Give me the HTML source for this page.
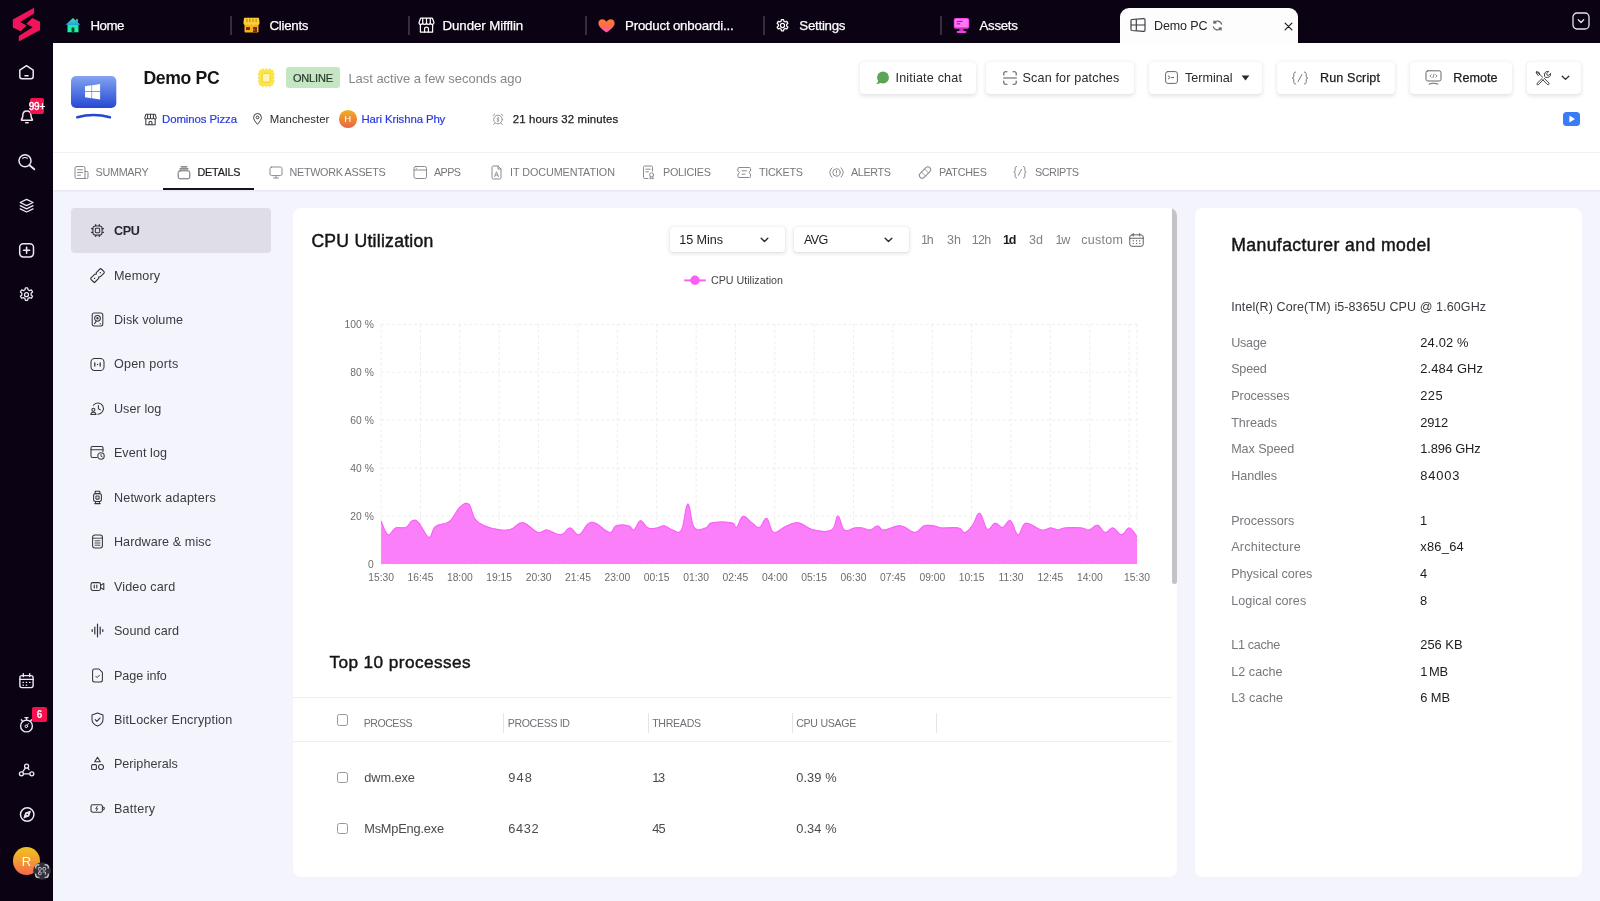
<!DOCTYPE html>
<html lang="en">
<head>
<meta charset="utf-8">
<title>Demo PC - CPU</title>
<style>
*{box-sizing:border-box;margin:0;padding:0}
html,body{width:1600px;height:901px;overflow:hidden}
body{font-family:"Liberation Sans",sans-serif;background:#f4f4fd;color:#1a1a1a;position:relative;will-change:transform}
.abs{position:absolute}
svg{display:block;overflow:visible}
/* dark chrome */
#rail{position:absolute;left:0;top:0;width:53px;height:901px;background:#0b0314}
#topbar{position:absolute;left:0;top:0;width:1600px;height:43px;background:#0b0314}
.ttab{position:absolute;top:0;height:43px;color:#fff;font-size:13.300px;line-height:51px;white-space:nowrap;-webkit-text-stroke:.25px #fff}
.tsep{position:absolute;top:16px;width:1.300px;height:19px;background:#352e40;margin-left:-.7px}
#acttab{position:absolute;left:1120px;top:8px;width:178px;height:36px;background:#fdfdfe;border-radius:9px 9px 0 0}
/* header */
#head{position:absolute;left:53px;top:43px;width:1547px;height:110px;background:#fff;border-bottom:1px solid #f2f2f6}
#tabs{position:absolute;left:53px;top:153px;width:1547px;height:37px;background:#fff;box-shadow:0 1px 2px rgba(40,40,80,.08)}
.tab{position:absolute;top:0;height:37px;line-height:38px;font-size:10.8px;color:#77777d;letter-spacing:.1px;white-space:nowrap}
.btn{position:absolute;top:62px;height:32px;background:#fff;border-radius:4px;box-shadow:0 1.500px 4px rgba(30,30,60,.13),0 0 1px rgba(30,30,60,.07);font-size:12.6px;color:#1d1d1f;line-height:32px;white-space:nowrap}
/* side menu */
.mi{position:absolute;left:114px;font-size:12.6px;color:#3a3a40;white-space:nowrap;line-height:16px}
.mic{position:absolute;left:90px}
/* cards */
.card{position:absolute;background:#fff;border-radius:8px}
.lbl{position:absolute;left:1231px;font-size:12.6px;color:#77777d;line-height:16px;white-space:nowrap}
.val{position:absolute;left:1420px;font-size:12.9px;color:#1d1d1f;line-height:16px;white-space:nowrap}
.th{position:absolute;top:716px;font-size:10.6px;color:#6f6f76;line-height:14px;white-space:nowrap}
.td{position:absolute;font-size:12.8px;color:#4a4a50;line-height:16px;white-space:nowrap}
.cb{position:absolute;width:11.500px;height:11.500px;border:1px solid #97979d;border-radius:2.500px;background:#fff}
.bt{top:70px;font-size:12.600px;line-height:16px;color:#2a2a2e;white-space:nowrap;letter-spacing:.3px}
.bm{color:#1d1d1f;-webkit-text-stroke:.25px #1d1d1f}
.sel{top:226.500px;height:25.500px;background:#fff;border-radius:3px;box-shadow:0 1px 4px rgba(30,30,60,.17),0 0 1px rgba(30,30,60,.12)}
.selt{top:232px;font-size:12.600px;line-height:16px;color:#1d1d1f;white-space:nowrap}
.rng{position:absolute;top:232px;font-size:12.5px;color:#808086;line-height:16px;white-space:nowrap}
</style>
</head>
<body>
<div id="topbar"></div>
<div id="rail"></div>
<div id="acttab"></div>
<div id="head"></div>
<div id="tabs"></div>


<!-- top tabs -->
<svg class="abs" style="left:0;top:0" width="53" height="50" viewBox="0 0 53 50"><path d="M34.1 7.8 L12.8 19.4 L12.8 27.5 L20.6 31.2 L26.6 25.6 L20.2 22.0 L34.1 13.4 Z" fill="#f0145a"/><path d="M18.8 41.5 L40.1 29.9 L40.1 21.8 L32.3 18.1 L26.3 23.7 L32.7 27.3 L18.8 35.9 Z" fill="#f0145a"/></svg>

<svg class="abs" style="left:65px;top:17px" width="16" height="16" viewBox="0 0 16 16"><defs><linearGradient id="gh" x1="0" y1="0" x2="0" y2="1"><stop offset="0" stop-color="#3fe6b4"/><stop offset=".47" stop-color="#2a9fe0"/><stop offset=".53" stop-color="#1fe9a6"/><stop offset="1" stop-color="#17f7a0"/></linearGradient></defs><path d="M8 1 L15.400 7.800 L13.500 7.800 L13.500 15.200 L2.500 15.200 L2.500 7.800 L.6 7.800 Z M11 2.200 L13 2.200 L13 5.200 L11 3.500 Z" fill="url(#gh)"/><rect x="6.600" y="10.600" width="2.800" height="4.600" rx=".6" fill="#0d4a3a"/></svg>
<div class="ttab" id="tt0" style=";letter-spacing:-0.49px;left:90.5px">Home</div>
<div class="tsep" style="left:231px"></div>

<svg class="abs" style="left:243px;top:17px" width="17" height="16" viewBox="0 0 17 16"><rect x="1.5" y="6" width="14" height="9.5" rx="1" fill="#f6b21c"/><path d="M1 1.5 Q1 .8 1.8 .8 L15.2 .8 Q16 .8 16 1.5 L16.6 6 Q16.6 8 14.6 8 Q13 8 12.6 6.8 Q12.2 8 10.6 8 Q9 8 8.5 6.8 Q8 8 6.4 8 Q4.8 8 4.4 6.8 Q4 8 2.4 8 Q.4 8 .4 6 Z" fill="#fbd13a"/><rect x="3.3" y="1.8" width="1.2" height="3.4" fill="#c78a10"/><rect x="6.3" y="1.8" width="1.2" height="3.4" fill="#c78a10"/><rect x="9.4" y="1.8" width="1.2" height="3.4" fill="#c78a10"/><rect x="12.5" y="1.8" width="1.2" height="3.4" fill="#c78a10"/><rect x="3" y="10" width="4" height="3" rx=".5" fill="#7a2a10"/><rect x="10" y="10" width="4" height="5.5" rx=".5" fill="#7a2a10"/><circle cx="11" cy="12.8" r=".6" fill="#fbd13a"/></svg>
<div class="ttab" id="tt1" style=";letter-spacing:-0.28px;left:269.5px">Clients</div>
<div class="tsep" style="left:409px"></div>

<svg class="abs" style="left:418px;top:17px" width="17" height="16" viewBox="0 0 17 16" fill="none" stroke="#fff" stroke-width="1.25" stroke-linejoin="round" stroke-linecap="round"><path d="M2.6 1.2 L14.4 1.2 L16 5.6 Q16 7.4 14.2 7.4 Q12.6 7.4 12.3 6 Q12 7.4 10.4 7.4 Q8.8 7.4 8.5 6 Q8.2 7.4 6.6 7.4 Q5 7.4 4.7 6 Q4.4 7.4 2.8 7.4 Q1 7.4 1 5.6 Z"/><path d="M2.4 7.6 L2.4 15 L14.6 15 L14.6 7.6"/><path d="M6.6 15 L6.6 11.6 Q6.6 10.2 8.5 10.2 Q10.4 10.2 10.4 11.6 L10.4 15"/><path d="M4.7 1.4 L4.7 5.6 M8.5 1.4 L8.5 5.6 M12.3 1.4 L12.3 5.6"/></svg>
<div class="ttab" id="tt2" style=";letter-spacing:-0.08px;left:442.5px">Dunder Mifflin</div>
<div class="tsep" style="left:586px"></div>

<svg class="abs" style="left:598px;top:19px" width="17" height="14" viewBox="0 0 17 14"><defs><linearGradient id="ght" x1="0" y1="0" x2="0" y2="1"><stop offset="0" stop-color="#ff7a2e"/><stop offset=".55" stop-color="#ff6a55"/><stop offset="1" stop-color="#ff4fd8"/></linearGradient></defs><path d="M8.5 13.6 C2 9 .4 6.6 .4 4.2 C.4 1.8 2.2 .3 4.3 .3 C6 .3 7.6 1.2 8.5 2.8 C9.4 1.2 11 .3 12.7 .3 C14.8 .3 16.6 1.8 16.6 4.2 C16.6 6.6 15 9 8.5 13.6 Z" fill="url(#ght)"/></svg>
<div class="ttab" id="tt3" style=";letter-spacing:-0.2px;left:625px">Product onboardi...</div>
<div class="tsep" style="left:764px"></div>

<svg class="abs" style="left:775px;top:18px" width="15" height="15" viewBox="0 0 24 24" fill="none" stroke="#fff" stroke-width="2" stroke-linejoin="round"><path d="M10.3 2.5 h3.4 l.6 2.7 l2 1.1 l2.6 -.9 l1.7 3 l-2 1.9 v2.4 l2 1.9 l-1.7 3 l-2.6 -.9 l-2 1.1 l-.6 2.7 h-3.4 l-.6 -2.7 l-2 -1.1 l-2.6 .9 l-1.7 -3 l2 -1.9 v-2.4 l-2 -1.900 l1.7 -3 l2.600 .9 l2 -1.100 z"/><circle cx="12" cy="12" r="3.300"/></svg>
<div class="ttab" id="tt4" style=";letter-spacing:-0.26px;left:799.3px">Settings</div>
<div class="tsep" style="left:941px"></div>

<svg class="abs" style="left:953px;top:17px" width="17" height="17" viewBox="0 0 17 17"><rect x=".8" y="1" width="15.400" height="10.800" rx="2" fill="#f23fe6"/><rect x="1.800" y="2" width="13.400" height="8" rx="1.200" fill="#ff79f3"/><rect x="3.600" y="3.800" width="6" height="1.300" fill="#b516ad"/><rect x="3.600" y="6.200" width="3.600" height="1.300" fill="#b516ad"/><path d="M6.600 11.800 h3.800 l.6 2.400 h-5 z" fill="#d827cc"/><rect x="3.600" y="14" width="9.800" height="2" rx="1" fill="#f23fe6"/></svg>
<div class="ttab" id="tt5" style=";letter-spacing:-0.32px;left:979.5px">Assets</div>

<!-- active tab -->
<svg class="abs" style="left:1130px;top:18px" width="16" height="14" viewBox="0 0 16 14" fill="none" stroke="#3a3a40" stroke-width="1.150" stroke-linejoin="round"><path d="M1 2.400 Q1 1.600 1.800 1.500 L13.600 .6 Q15 .5 15 1.800 L15 12.200 Q15 13.500 13.600 13.400 L1.800 12.500 Q1 12.400 1 11.600 Z"/><path d="M6.300 1.200 L6.300 12.800 M1 7 L15 7"/></svg>
<div class="abs" id="t_tab" style="top:18px;font-size:12.500px;line-height:16px;color:#26262b;white-space:nowrap;letter-spacing:-0.12px;left:1154px">Demo PC</div>
<svg class="abs" style="left:1212px;top:20px" width="11" height="11" viewBox="0 0 11 11" fill="none" stroke="#55555c" stroke-width="1.100" stroke-linecap="round"><path d="M9.700 4.200 A4.400 4.400 0 0 0 2 2.800"/><path d="M1.300 6.800 A4.400 4.400 0 0 0 9 8.200"/><path d="M2 .9 L2 2.900 L4 2.900 M9 10.100 L9 8.100 L7 8.100"/></svg>
<svg class="abs" style="left:1284px;top:22px" width="9" height="9" viewBox="0 0 9 9" stroke="#1d1d1f" stroke-width="1.200" stroke-linecap="round"><path d="M1.100 1.100 L7.900 7.900 M7.900 1.100 L1.100 7.900"/></svg>
<svg class="abs" style="left:1572px;top:12px" width="18" height="18" viewBox="0 0 18 18" fill="none" stroke="#e6e3ec" stroke-width="1.300" stroke-linecap="round" stroke-linejoin="round"><rect x="1" y="1" width="16" height="16" rx="4"/><path d="M6.300 7.800 L9 10.500 L11.700 7.800"/></svg>

<!-- rail -->
<svg class="abs" style="left:0;top:43px" width="53" height="858" viewBox="0 43 53 858" fill="none" stroke="#ece9f1" stroke-width="1.500" stroke-linecap="round" stroke-linejoin="round">
<!-- home -->
<path d="M19.800 70.200 L26.500 65.700 L33.200 70.200 L33.200 76.600 Q33.200 78.800 31 78.800 L22 78.800 Q19.800 78.800 19.800 76.600 Z"/><path d="M25 75.800 L28 75.800"/>
<!-- bell -->
<path d="M22.300 120.300 Q21 120.300 21.600 119.200 Q22.800 117.500 22.800 115.400 Q22.800 111 26.900 111 Q31 111 31 115.400 Q31 117.500 32.200 119.200 Q32.800 120.300 31.500 120.300 Z"/><path d="M25.700 122.800 L28.100 122.800"/>
<!-- search -->
<circle cx="25" cy="160.800" r="6"/><path d="M29.500 165.200 L34.300 169.300" stroke-width="1.800"/><path d="M22.600 158.300 Q25 156.600 27.400 158.300" stroke-width="1.100"/>
<!-- layers -->
<path d="M26.600 199.400 L33 202.500 L26.600 205.600 L20.200 202.500 Z" stroke-width="1.300"/><path d="M20.200 205.700 L26.600 208.800 L33 205.700" stroke-width="1.300"/><path d="M20.200 208.900 L26.600 212 L33 208.900" stroke-width="1.300"/>
<!-- plus -->
<rect x="19.700" y="243.700" width="13.800" height="13.200" rx="3.600"/><path d="M26.600 247.300 L26.600 253.300 M23.600 250.300 L29.600 250.300" stroke-width="1.600"/>
<!-- gear -->
<g transform="translate(26.500 294.700) scale(.66) translate(-12 -12)" stroke-width="1.900"><path d="M10.300 1.500 h3.400 l.7 3 l2.200 1.300 l2.900 -1 l1.700 3 l-2.200 2 v2.600 l2.200 2 l-1.700 3 l-2.900 -1 l-2.200 1.300 l-.7 3 h-3.400 l-.7 -3 l-2.200 -1.300 l-2.900 1 l-1.700 -3 l2.200 -2 v-2.600 l-2.200 -2 l1.700 -3 l2.900 1 l2.200 -1.300 z"/><circle cx="12" cy="12" r="3"/></g>
<!-- calendar -->
<rect x="19.900" y="675.600" width="13.200" height="12" rx="2" stroke-width="1.400"/><path d="M19.900 679.400 L33.100 679.400 M23.300 673.800 L23.300 676.600 M29.700 673.800 L29.700 676.600" stroke-width="1.400"/><path d="M23 682.400 h.4 M26.300 682.400 h.4 M29.600 682.400 h.4 M23 685.200 h.4 M26.300 685.200 h.4" stroke-width="1.300"/>
<!-- stopwatch -->
<circle cx="26.500" cy="726" r="5.900" stroke-width="1.400"/><path d="M24.900 717.600 L28.100 717.600 M26.500 717.800 L26.500 719.800 M21.300 719.800 L22.500 721 M31.700 719.800 L30.500 721" stroke-width="1.300"/><circle cx="26.300" cy="726.300" r="1.300" stroke-width="1"/><path d="M27.200 725.300 L28.600 723.600" stroke-width="1"/>
<!-- network -->
<circle cx="26.600" cy="766.200" r="2" stroke-width="1.300"/><circle cx="21.400" cy="773.800" r="2" stroke-width="1.300"/><circle cx="31.800" cy="773.800" r="2" stroke-width="1.300"/><path d="M25.400 767.900 L22.600 772 M27.800 767.900 L29 769.600 M23.600 773.800 L29.600 773.800" stroke-width="1.300"/>
<!-- compass -->
<circle cx="27.200" cy="814.500" r="6.700" stroke-width="1.500"/><path d="M30.300 811.400 L28.700 816 L24.100 817.600 L25.700 813 Z" stroke-width="1.200" fill="#ece9f1"/><circle cx="27.200" cy="814.500" r=".8" fill="#0b0314" stroke="none"/>
</svg>
<div class="abs" style="left:29.500px;top:98.300px;width:14.800px;height:15.700px;border-radius:2px;background:#f4114f"></div>
<div class="abs" style="left:24.500px;top:98.500px;width:25px;height:15px;line-height:15px;text-align:center;color:#fff;font-size:10px;-webkit-text-stroke:.4px #fff;letter-spacing:-.1px">99+</div>
<div class="abs" style="left:32px;top:707px;width:15px;height:15px;border-radius:2px;background:#f4114f;line-height:15px;text-align:center;color:#fff;font-size:10px;font-weight:bold">6</div>
<div class="abs" style="left:13px;top:847px;width:27px;height:28px;border-radius:50%;background:linear-gradient(180deg,#efc321 0%,#f3a030 45%,#f5674d 100%);color:#fff;font-size:13px;line-height:29px;text-align:center">R</div>
<svg class="abs" style="left:33.400px;top:862.200px" width="18" height="18" viewBox="0 0 18 18" fill="none" stroke="#e4e2e8" stroke-width="1.150" stroke-linecap="round" stroke-linejoin="round"><circle cx="9" cy="9" r="8.800" fill="#302e38" stroke="none"/><path d="M2.800 6 V4.800 Q2.800 2.800 4.800 2.800 H6 M12 2.800 H13.200 Q15.200 2.800 15.200 4.800 V6 M15.200 12 V13.200 Q15.200 15.200 13.200 15.200 H12 M6 15.200 H4.800 Q2.800 15.200 2.800 13.200 V12"/><g stroke-width=".95" stroke="#c9c7cf"><rect x="5.500" y="5.500" width="2.700" height="2.700" rx=".7"/><rect x="9.900" y="5.500" width="2.700" height="2.700" rx=".7"/><rect x="5.500" y="9.900" width="2.700" height="2.700" rx=".7"/><path d="M10 10 h2.400 v2.400"/></g></svg>

<!-- header -->
<svg class="abs" style="left:66px;top:70px" width="56" height="54" viewBox="66 70 56 54"><defs><linearGradient id="gm" x1="0" y1="0" x2="0" y2="1"><stop offset="0" stop-color="#86a4ef"/><stop offset=".4" stop-color="#5b7fe6"/><stop offset="1" stop-color="#2648d3"/></linearGradient></defs><rect x="71" y="76" width="45.300" height="32" rx="5" fill="url(#gm)"/><path d="M85 86.200 L91.500 85.300 L91.500 91.300 L85 91.300 Z M92.100 85.200 L100.100 84 L100.100 91.300 L92.100 91.300 Z M85 91.900 L91.500 91.900 L91.500 98.200 L85 97.300 Z M92.100 91.900 L100.100 91.900 L100.100 99.500 L92.100 98.300 Z" fill="#fff"/><path d="M77.300 117.300 Q93.600 112.500 109.900 117.300" fill="none" stroke="#2347d2" stroke-width="2.500" stroke-linecap="round"/></svg>
<div id="t_name" class="abs" style="top:67px;font-size:17.600px;font-weight:bold;line-height:22px;color:#151517;white-space:nowrap;letter-spacing:-0.35px;left:143.5px">Demo PC</div>
<svg class="abs" style="left:257px;top:67px" width="20" height="21" viewBox="0 0 20 21"><g stroke="#f3cf48" stroke-width="1.300" stroke-linecap="round"><path d="M5.900 1.900 V19.500 M9.200 1.900 V19.500 M12.500 1.900 V19.500 M1.300 7.300 H17.100 M1.300 10.700 H17.100 M1.300 14.100 H17.100"/></g><rect x="1.700" y="2.400" width="15" height="16.600" rx="3" fill="#fbe743"/><rect x="5.300" y="6.300" width="7.800" height="8.800" rx="1.300" fill="#fef5b4" stroke="#efcb35" stroke-width="1"/></svg>
<div class="abs" style="left:286px;top:67px;width:54px;height:21px;border-radius:3px;background:#c5e6c3"></div>
<div id="t_online" class="abs" style="top:71px;font-size:11px;line-height:15px;color:#2b3a2e;white-space:nowrap;letter-spacing:-0.19px;left:293px;-webkit-text-stroke:.2px #2b3a2e">ONLINE</div>
<div id="t_last" class="abs" style="top:69.500px;font-size:13px;line-height:17px;color:#87878c;white-space:nowrap;letter-spacing:-0.03px;left:348.4px">Last active a few seconds ago</div>

<svg class="abs" style="left:144px;top:112.500px" width="13" height="13" viewBox="0 0 17 16" fill="none" stroke="#3a3a40" stroke-width="1.350" stroke-linejoin="round" stroke-linecap="round"><path d="M2.600 1.200 L14.400 1.200 L16 5.600 Q16 7.400 14.200 7.400 Q12.600 7.400 12.300 6 Q12 7.400 10.400 7.400 Q8.800 7.400 8.500 6 Q8.200 7.400 6.600 7.400 Q5 7.400 4.700 6 Q4.400 7.400 2.800 7.400 Q1 7.400 1 5.600 Z"/><path d="M2.400 7.600 L2.400 15 L14.600 15 L14.600 7.600"/><path d="M6.600 15 L6.600 11.600 Q6.600 10.200 8.500 10.200 Q10.400 10.200 10.400 11.600 L10.400 15"/><path d="M4.700 1.400 L4.700 5.600 M8.500 1.400 L8.500 5.600 M12.300 1.400 L12.300 5.600"/></svg>
<div id="t_dom" class="abs" style="top:112px;font-size:11.400px;line-height:15px;color:#2838e4;white-space:nowrap;letter-spacing:-0.08px;left:162px;-webkit-text-stroke:.2px #2838e4">Dominos Pizza</div>
<svg class="abs" style="left:253px;top:113px" width="9" height="12" viewBox="0 0 9 12" fill="none" stroke="#3a3a40" stroke-width="1"><path d="M4.500 11.300 C1.600 8 .6 6.200 .6 4.400 A3.900 3.900 0 0 1 8.400 4.400 C8.400 6.200 7.400 8 4.500 11.300 Z"/><circle cx="4.500" cy="4.400" r="1.400"/></svg>
<div id="t_man" class="abs" style="top:112px;font-size:11.400px;line-height:15px;color:#2a2a2e;white-space:nowrap;letter-spacing:0.01px;left:269.7px">Manchester</div>
<div class="abs" style="left:339px;top:110px;width:17.500px;height:17.500px;border-radius:50%;background:linear-gradient(180deg,#efb024 0%,#ee8636 55%,#ea6244 100%);color:#fff;font-size:9.500px;line-height:17.500px;text-align:center">H</div>
<div id="t_hari" class="abs" style="top:112px;font-size:11.400px;line-height:15px;color:#2838e4;white-space:nowrap;letter-spacing:-0.11px;left:361.5px;-webkit-text-stroke:.2px #2838e4">Hari Krishna Phy</div>
<svg class="abs" style="left:492px;top:112.500px" width="12" height="12" viewBox="0 0 12 12" fill="none" stroke="#8a8a90" stroke-width=".9" stroke-linecap="round"><circle cx="6" cy="6.500" r="4.300"/><path d="M1 2.600 L2.800 1 M11 2.600 L9.200 1 M2.600 10.400 L1.800 11.400 M9.400 10.400 L10.200 11.400"/><path d="M6.900 5 Q5.200 4.600 5.200 5.800 Q5.200 6.600 6 6.600 Q6.900 6.700 6.900 7.500 Q6.800 8.500 5.100 8.100 M6 4.300 V8.900" stroke-width=".7"/></svg>
<div id="t_hrs" class="abs" style="top:112px;font-size:11.400px;line-height:15px;color:#1d1d1f;white-space:nowrap;-webkit-text-stroke:.25px #1d1d1f;letter-spacing:0.12px;left:512.8px">21 hours 32 minutes</div>

<!-- action buttons -->
<div class="btn" style="left:860px;width:116px"></div>
<svg class="abs" style="left:875px;top:71px" width="15" height="14" viewBox="0 0 15 14"><circle cx="8" cy="6.500" r="5.900" fill="#5ca557"/><path d="M3.200 9.500 Q3 11.800 1 12.900 Q4.200 13.200 6.200 11.600 Z" fill="#5ca557"/><path d="M3.600 9.200 A5.900 5.900 0 0 0 13.600 8.200 A6.500 6.500 0 0 1 3.600 9.200Z" fill="#4b9147" opacity=".55"/></svg>
<div id="b1" class="abs bt" style=";letter-spacing:0.17px;left:895.5px">Initiate chat</div>
<div class="btn" style="left:986px;width:148px"></div>
<svg class="abs" style="left:1003px;top:71px" width="14" height="14" viewBox="0 0 14 14" fill="none" stroke="#55555c" stroke-width="1.100" stroke-linecap="round" stroke-linejoin="round"><path d="M.8 4 V2.300 Q.8 .8 2.300 .8 H4 M10 .8 H11.700 Q13.200 .8 13.200 2.300 V4 M13.200 10 V11.700 Q13.200 13.200 11.700 13.200 H10 M4 13.200 H2.300 Q.8 13.200 .8 11.700 V10 M.6 7 H13.400"/></svg>
<div id="b2" class="abs bt" style=";letter-spacing:0.15px;left:1022.5px">Scan for patches</div>
<div class="btn" style="left:1149px;width:113px"></div>
<svg class="abs" style="left:1165px;top:71px" width="13" height="13" viewBox="0 0 13 13" fill="none" stroke="#66666c" stroke-width="1" stroke-linecap="round" stroke-linejoin="round"><rect x=".6" y=".6" width="11.800" height="11.800" rx="2.200"/><path d="M3.300 4.900 L5.200 6.400 L3.300 7.900 M6.600 6.500 H8.600"/></svg>
<div id="b3" class="abs bt" style=";letter-spacing:-0.01px;left:1185px">Terminal</div>
<svg class="abs" style="left:1241px;top:75px" width="9" height="6" viewBox="0 0 9 6"><path d="M.6 .6 H8.400 L4.500 5.400 Z" fill="#2a2a2e"/></svg>
<div class="btn" style="left:1277px;width:118px"></div>
<svg class="abs" style="left:1291px;top:71px" width="18" height="14" viewBox="0 0 18 14" fill="none" stroke="#7a7a80" stroke-width="1" stroke-linecap="round" stroke-linejoin="round"><path d="M4.600 1 Q2.800 1 2.800 2.600 V5.200 Q2.800 6.800 1.200 7 Q2.800 7.200 2.800 8.800 V11.400 Q2.800 13 4.600 13"/><path d="M13.400 1 Q15.200 1 15.200 2.600 V5.200 Q15.200 6.800 16.800 7 Q15.200 7.200 15.200 8.800 V11.400 Q15.200 13 13.400 13"/><path d="M11 3.400 L7 10.600"/></svg>
<div id="b4" class="abs bt bm" style=";letter-spacing:0.13px;left:1320px">Run Script</div>
<div class="btn" style="left:1410px;width:102px"></div>
<svg class="abs" style="left:1425px;top:70px" width="17" height="15" viewBox="0 0 17 15" fill="none" stroke="#66666c" stroke-width="1" stroke-linecap="round" stroke-linejoin="round"><rect x="1" y=".8" width="15" height="10.200" rx="1.800"/><path d="M4 14 Q8.500 12.200 13 14"/><path d="M6.200 4.600 L4.900 5.900 L6.200 7.200 M10.800 4.600 L12.100 5.900 L10.800 7.200 M9.100 4.200 L7.900 7.600" stroke-width=".8"/></svg>
<div id="b5" class="abs bt bm" style=";letter-spacing:0.02px;left:1453.3px">Remote</div>
<div class="btn" style="left:1527px;width:54px"></div>
<svg class="abs" style="left:1535px;top:70px" width="16" height="15" viewBox="0 0 16 15" fill="none" stroke="#3a3a40" stroke-width=".95" stroke-linecap="round" stroke-linejoin="round"><path d="M1.600 1.400 L4.200 2.600 L4.700 4.300 L7.600 7.200 M4.700 4.300 L3.600 5.400 L2.400 4.800 L1.200 2.400 Z"/><path d="M9.300 8.400 L13.900 13 Q14.400 13.900 13.700 14.500 Q12.900 15 12.200 14.300 L7.700 9.800"/><path d="M6.900 8.700 L2 13.400 Q1.500 14.200 2.200 14.700 Q3 15.100 3.600 14.500 L8.300 9.700"/><path d="M9.500 6.100 Q8.800 3.700 10.600 2.100 Q12 1 13.700 1.500 L11.700 3.500 L12.100 5 L13.600 5.400 L15.500 3.400 Q15.900 5.200 14.700 6.500 Q13.300 7.900 11 7.400 Z"/></svg>
<svg class="abs" style="left:1561px;top:75px" width="9" height="6" viewBox="0 0 9 6" fill="none" stroke="#2a2a2e" stroke-width="1.300" stroke-linecap="round" stroke-linejoin="round"><path d="M1.200 1.200 L4.500 4.400 L7.800 1.200"/></svg>
<div class="abs" style="left:1563px;top:112px;width:17px;height:13.500px;border-radius:3.500px;background:#3a7bf7"></div>
<svg class="abs" style="left:1568px;top:115px" width="8" height="8" viewBox="0 0 8 8"><path d="M1.400 .6 L7 4 L1.400 7.400 Z" fill="#fff"/></svg>

<!-- tab row -->
<div class="abs" style="left:163px;top:188.400px;width:91px;height:2px;background:#151517"></div>
<svg class="abs" style="left:73.6px;top:164.500px" width="15" height="15" viewBox="0 0 15 15" fill="none" stroke="#8b8b91" stroke-width="1" stroke-linecap="round" stroke-linejoin="round"><rect x="1" y="1.500" width="10" height="12" rx="1.500"/><path d="M11 6.500 H13 Q14 6.500 14 7.500 V12 Q14 13.500 12.500 13.500 H9.500 M3.500 4.800 H8.500 M3.500 7.500 H8.500 M3.500 10.200 H6.500"/></svg>
<div class="tab" id="tab_sum" style="top:153px;letter-spacing:-0.28px;left:95.5px">SUMMARY</div>
<svg class="abs" style="left:176.5px;top:164.500px" width="15" height="15" viewBox="0 0 15 15" fill="none" stroke="#66666c" stroke-width="1" stroke-linecap="round" stroke-linejoin="round"><rect x="1.200" y="5.800" width="11.600" height="8" rx="1.800"/><path d="M3 3.800 H11 M4.200 1.800 H9.800" stroke-width="1.300"/></svg>
<div class="tab" id="tab_det" style="top:153px;color:#1d1d1f;-webkit-text-stroke:.2px #1d1d1f;letter-spacing:-0.17px;left:197.4px">DETAILS</div>
<svg class="abs" style="left:269.0px;top:164.500px" width="15" height="15" viewBox="0 0 15 15" fill="none" stroke="#8b8b91" stroke-width="1" stroke-linecap="round" stroke-linejoin="round"><rect x="1" y="2" width="12" height="8.600" rx="1.600"/><path d="M4.600 13 H9.400 M7 10.800 V12.800"/></svg>
<div class="tab" id="tab_net" style="top:153px;letter-spacing:-0.32px;left:289.6px">NETWORK ASSETS</div>
<svg class="abs" style="left:412.7px;top:164.500px" width="15" height="15" viewBox="0 0 15 15" fill="none" stroke="#8b8b91" stroke-width="1" stroke-linecap="round" stroke-linejoin="round"><rect x="1" y="1.500" width="12.500" height="12" rx="1.800"/><path d="M1 5 H13.500 M3.200 3.300 h.3"/></svg>
<div class="tab" id="tab_apps" style="top:153px;letter-spacing:-0.6px;left:434px">APPS</div>
<svg class="abs" style="left:490.4px;top:164.500px" width="15" height="15" viewBox="0 0 15 15" fill="none" stroke="#8b8b91" stroke-width="1" stroke-linecap="round" stroke-linejoin="round"><path d="M2 2.300 Q2 1 3.300 1 H8 L11 4 V12.700 Q11 14 9.700 14 H3.300 Q2 14 2 12.700 Z M8 1 V4 H11"/><path d="M4.600 11.600 L6.500 6.800 L8.400 11.600 M5.300 10 H7.700" stroke-width=".9"/></svg>
<div class="tab" id="tab_doc" style="top:153px;letter-spacing:-0.08px;left:510px">IT DOCUMENTATION</div>
<svg class="abs" style="left:642.0px;top:164.500px" width="15" height="15" viewBox="0 0 15 15" fill="none" stroke="#8b8b91" stroke-width="1" stroke-linecap="round" stroke-linejoin="round"><path d="M10.500 6 V2.300 Q10.500 1 9.200 1 H2.800 Q1.500 1 1.500 2.300 V12.200 Q1.500 13.500 2.800 13.500 H6"/><path d="M3.800 4.200 H8.200 M3.800 6.800 H6.500"/><circle cx="9.600" cy="9.800" r="2"/><path d="M8.400 11.400 L8 14 L9.600 13.200 L11.200 14 L10.800 11.400"/></svg>
<div class="tab" id="tab_pol" style="top:153px;letter-spacing:-0.26px;left:663px">POLICIES</div>
<svg class="abs" style="left:737.0px;top:164.500px" width="15" height="15" viewBox="0 0 15 15" fill="none" stroke="#8b8b91" stroke-width="1" stroke-linecap="round" stroke-linejoin="round"><path d="M1 3.500 Q1 2.500 2 2.500 H12.500 Q13.500 2.500 13.500 3.500 V6 Q12.200 6.300 12.200 7.500 Q12.200 8.700 13.500 9 V11.500 Q13.500 12.500 12.500 12.500 H2 Q1 12.500 1 11.500 V9 Q2.300 8.700 2.300 7.500 Q2.300 6.300 1 6 Z"/><path d="M5 5.800 H9.500 M5 9.200 H8"/></svg>
<div class="tab" id="tab_tic" style="top:153px;letter-spacing:-0.27px;left:759px">TICKETS</div>
<svg class="abs" style="left:829.0px;top:164.500px" width="15" height="15" viewBox="0 0 15 15" fill="none" stroke="#8b8b91" stroke-width="1" stroke-linecap="round" stroke-linejoin="round"><circle cx="7.500" cy="7.500" r="3.700"/><path d="M7.500 5.700 V7.800 M7.500 9.300 v.01" stroke-width="1"/><path d="M3 2.800 Q.8 5 .8 7.500 Q.8 10 3 12.200 M12 2.800 Q14.200 5 14.200 7.500 Q14.200 10 12 12.200"/></svg>
<div class="tab" id="tab_ale" style="top:153px;letter-spacing:-0.36px;left:851px">ALERTS</div>
<svg class="abs" style="left:918.0px;top:164.500px" width="15" height="15" viewBox="0 0 15 15" fill="none" stroke="#8b8b91" stroke-width="1" stroke-linecap="round" stroke-linejoin="round"><g transform="rotate(-45 7 7.500)"><rect x=".2" y="4.700" width="13.600" height="5.600" rx="2.800"/><path d="M4.800 4.900 V10.100 M9.200 4.900 V10.100" stroke-width=".8"/></g></svg>
<div class="tab" id="tab_pat" style="top:153px;letter-spacing:-0.23px;left:939px">PATCHES</div>
<svg class="abs" style="left:1013.0px;top:164.500px" width="15" height="15" viewBox="0 0 15 15" fill="none" stroke="#8b8b91" stroke-width="1" stroke-linecap="round" stroke-linejoin="round"><path d="M3.600 1.500 Q2.200 1.500 2.200 2.800 V5.600 Q2.200 7 .8 7.200 Q2.200 7.400 2.200 8.800 V11.600 Q2.200 13 3.600 13 M10.400 1.500 Q11.800 1.500 11.800 2.800 V5.600 Q11.800 7 13.200 7.200 Q11.800 7.400 11.800 8.800 V11.600 Q11.800 13 10.400 13 M8.600 4.200 L5.400 10.400"/></svg>
<div class="tab" id="tab_scr" style="top:153px;letter-spacing:-0.47px;left:1035px">SCRIPTS</div>

<!-- cards -->
<div class="card" id="menuSel" style="left:71px;top:208px;width:200px;height:45px;background:#dedde8;border-radius:4px"></div>
<div class="card" id="main" style="left:293px;top:208px;width:884px;height:669px;overflow:hidden"><div style="position:absolute;right:0;top:0;width:5px;height:376px;background:#c3c3c6;border-radius:0 0 2.500px 2.500px"></div></div>
<div class="card" id="right" style="left:1195px;top:208px;width:387px;height:669px"></div>

<!-- BODY -->
<svg class="abs" style="left:90px;top:223.2px" width="15" height="15" viewBox="0 0 15 15" fill="none" stroke="#34343a" stroke-width="1.050" stroke-linecap="round" stroke-linejoin="round"><rect x="2.900" y="2.900" width="9.200" height="9.200" rx="2.600"/><rect x="5.300" y="5.300" width="4.400" height="4.400" rx=".9"/><path d="M5.700 1.500 V2.700 M9.300 1.500 V2.700 M5.700 12.300 V13.500 M9.300 12.300 V13.500 M1.500 5.700 H2.700 M1.500 9.300 H2.700 M12.300 5.700 H13.500 M12.300 9.300 H13.500" stroke-width="1.200"/></svg>
<div class="mi" id="mi0" style="top:223px;font-weight:bold;color:#26262b;letter-spacing:-0.35px;left:113.9px">CPU</div>
<svg class="abs" style="left:90px;top:267.6px" width="15" height="15" viewBox="0 0 15 15" fill="none" stroke="#34343a" stroke-width="1.050" stroke-linecap="round" stroke-linejoin="round"><g transform="rotate(-45 7.500 7.500)"><path d="M.2 5.600 Q.2 4.600 1.200 4.600 H6.300 L7.500 5.700 L8.700 4.600 H13.800 Q14.800 4.600 14.800 5.600 V9.400 Q14.800 10.400 13.800 10.400 H8.700 L7.500 9.300 L6.300 10.400 H1.200 Q.2 10.400 .2 9.400 Z" stroke-width="1.150"/><path d="M3.200 7.500 h.6 M11.200 7.500 h.6" stroke-width="1"/></g></svg>
<div class="mi" id="mi1" style="top:268px;letter-spacing:0.16px;left:113.9px">Memory</div>
<svg class="abs" style="left:90px;top:312.0px" width="15" height="15" viewBox="0 0 15 15" fill="none" stroke="#34343a" stroke-width="1.050" stroke-linecap="round" stroke-linejoin="round"><rect x="2.200" y="1" width="10.600" height="13" rx="2"/><circle cx="7.500" cy="6.300" r="2.900"/><circle cx="7.500" cy="6.300" r=".7"/><path d="M4.500 11.600 L6.200 9.400 M10 11.700 h.6"/></svg>
<div class="mi" id="mi2" style="top:312px;letter-spacing:0.05px;left:113.9px">Disk volume</div>
<svg class="abs" style="left:90px;top:356.5px" width="15" height="15" viewBox="0 0 15 15" fill="none" stroke="#34343a" stroke-width="1.050" stroke-linecap="round" stroke-linejoin="round"><rect x="1" y="1.500" width="13" height="12" rx="3.600"/><path d="M4.800 6 V9 M10.200 6 V9 M7.500 7.500 h.01" stroke-width="1.300"/></svg>
<div class="mi" id="mi3" style="top:356px;letter-spacing:0.22px;left:113.9px">Open ports</div>
<svg class="abs" style="left:90px;top:400.9px" width="15" height="15" viewBox="0 0 15 15" fill="none" stroke="#34343a" stroke-width="1.050" stroke-linecap="round" stroke-linejoin="round"><path d="M3.300 4.300 A5.600 5.600 0 1 1 7.800 13.200"/><path d="M8.400 4.600 V7.700 L10.400 8.900"/><circle cx="3.400" cy="8.700" r="1.500"/><path d="M.9 13.400 Q.9 11.300 3.400 11.300 Q5.900 11.300 5.900 13.400 Z"/></svg>
<div class="mi" id="mi4" style="top:401px;letter-spacing:0.08px;left:113.9px">User log</div>
<svg class="abs" style="left:90px;top:445.4px" width="15" height="15" viewBox="0 0 15 15" fill="none" stroke="#34343a" stroke-width="1.050" stroke-linecap="round" stroke-linejoin="round"><path d="M13 6.500 V3 Q13 1.500 11.500 1.500 H2.500 Q1 1.500 1 3 V11 Q1 12.500 2.500 12.500 H7"/><path d="M1 4.800 H13"/><circle cx="11" cy="11" r="3.200"/><path d="M11 9.400 V11.200 L12.200 11.800" stroke-width=".9"/></svg>
<div class="mi" id="mi5" style="top:445px;letter-spacing:0.07px;left:113.9px">Event log</div>
<svg class="abs" style="left:90px;top:489.8px" width="15" height="15" viewBox="0 0 15 15" fill="none" stroke="#34343a" stroke-width="1.050" stroke-linecap="round" stroke-linejoin="round"><rect x="3.600" y="3.600" width="7.800" height="7.800" rx="2"/><rect x="5.900" y="5.900" width="3.200" height="3.200" rx=".6"/><path d="M5.200 3.400 V1.200 H9.800 V3.400 M5.600 11.600 V13 M9.400 11.600 V13 M4.800 13.600 H10.200"/></svg>
<div class="mi" id="mi6" style="top:490px;letter-spacing:0.21px;left:113.9px">Network adapters</div>
<svg class="abs" style="left:90px;top:534.2px" width="15" height="15" viewBox="0 0 15 15" fill="none" stroke="#34343a" stroke-width="1.050" stroke-linecap="round" stroke-linejoin="round"><rect x="2.600" y="1" width="9.800" height="13" rx="2.200"/><path d="M2.600 4.200 H12.400 M5 6.800 H10 M5 9 H10 M5 11.200 H10" stroke-width=".9"/></svg>
<div class="mi" id="mi7" style="top:534px;letter-spacing:0.09px;left:113.9px">Hardware &amp; misc</div>
<svg class="abs" style="left:90px;top:578.7px" width="15" height="15" viewBox="0 0 15 15" fill="none" stroke="#34343a" stroke-width="1.050" stroke-linecap="round" stroke-linejoin="round"><rect x="1" y="3.600" width="9.600" height="7.800" rx="1.800"/><path d="M10.600 6.300 L13.800 4.400 V10.600 L10.600 8.700"/><path d="M4.300 6 V9 M6.800 6 V9" stroke-width="1.100"/></svg>
<div class="mi" id="mi8" style="top:579px;letter-spacing:0.15px;left:113.9px">Video card</div>
<svg class="abs" style="left:90px;top:623.1px" width="15" height="15" viewBox="0 0 15 15" fill="none" stroke="#34343a" stroke-width="1.050" stroke-linecap="round" stroke-linejoin="round"><path d="M7.500 1.200 V13.800 M4.800 4 V11 M10.200 4 V11 M2.200 6.500 V8.500 M12.800 6.500 V8.500" stroke-width="1.200"/></svg>
<div class="mi" id="mi9" style="top:623px;letter-spacing:0.08px;left:113.9px">Sound card</div>
<svg class="abs" style="left:90px;top:667.5px" width="15" height="15" viewBox="0 0 15 15" fill="none" stroke="#34343a" stroke-width="1.050" stroke-linecap="round" stroke-linejoin="round"><path d="M2.600 3 Q2.600 1 4.600 1 H9 L12.400 4.400 V12 Q12.400 14 10.400 14 H4.600 Q2.600 14 2.600 12 Z"/><path d="M5.800 8.300 L7.100 9.600 L9.400 7.200" stroke-width="1"/></svg>
<div class="mi" id="mi10" style="top:668px;letter-spacing:-0.03px;left:113.9px">Page info</div>
<svg class="abs" style="left:90px;top:712.0px" width="15" height="15" viewBox="0 0 15 15" fill="none" stroke="#34343a" stroke-width="1.050" stroke-linecap="round" stroke-linejoin="round"><path d="M7.500 1 L13 3 V7.400 Q13 11.600 7.500 14 Q2 11.600 2 7.400 V3 Z"/><path d="M5.200 7.600 L6.900 9.300 L10 6" stroke-width="1.100"/></svg>
<div class="mi" id="mi11" style="top:712px;letter-spacing:0.15px;left:113.9px">BitLocker Encryption</div>
<svg class="abs" style="left:90px;top:756.4px" width="15" height="15" viewBox="0 0 15 15" fill="none" stroke="#34343a" stroke-width="1.050" stroke-linecap="round" stroke-linejoin="round"><path d="M7.500 1.200 L10.300 5.800 H4.700 Z"/><rect x="1.600" y="8.600" width="4.800" height="4.800" rx="1"/><circle cx="11" cy="11" r="2.500"/></svg>
<div class="mi" id="mi12" style="top:756px;letter-spacing:0.02px;left:113.9px">Peripherals</div>
<svg class="abs" style="left:90px;top:800.9px" width="15" height="15" viewBox="0 0 15 15" fill="none" stroke="#34343a" stroke-width="1.050" stroke-linecap="round" stroke-linejoin="round"><rect x="1" y="3.800" width="11.400" height="7.400" rx="1.800"/><path d="M12.600 6.300 H13.600 Q14.200 6.300 14.200 6.900 V8.100 Q14.200 8.700 13.600 8.700 H12.600"/><path d="M7.300 5.400 L5.700 7.700 H7.700 L6.300 9.800" stroke-width=".9"/></svg>
<div class="mi" id="mi13" style="top:801px;letter-spacing:0.22px;left:113.9px">Battery</div>
<div class="abs" id="c_title" style="top:230px;font-size:17.600px;line-height:22px;color:#151517;white-space:nowrap;-webkit-text-stroke:.45px #151517;letter-spacing:0.26px;left:311.4px">CPU Utilization</div>
<div class="abs sel" style="left:670px;width:115px"></div><div class="abs sel" style="left:794px;width:115px"></div>
<div class="abs selt" id="s1" style=";letter-spacing:-0.05px;left:679.2px">15 Mins</div><div class="abs selt" id="s2" style=";letter-spacing:-0.74px;left:804px">AVG</div>
<svg class="abs" style="left:760px;top:237px" width="9" height="6" viewBox="0 0 9 6" fill="none" stroke="#2a2a2e" stroke-width="1.400" stroke-linecap="round" stroke-linejoin="round"><path d="M1.200 1.200 L4.500 4.400 L7.800 1.200"/></svg><svg class="abs" style="left:884px;top:237px" width="9" height="6" viewBox="0 0 9 6" fill="none" stroke="#2a2a2e" stroke-width="1.400" stroke-linecap="round" stroke-linejoin="round"><path d="M1.200 1.200 L4.500 4.400 L7.800 1.200"/></svg>
<div class="rng" id="r0" style=";letter-spacing:-1.100px;left:921px">1h</div>
<div class="rng" id="r1" style=";letter-spacing:0.09px;left:947px">3h</div>
<div class="rng" id="r2" style=";letter-spacing:-0.63px;left:971.7px">12h</div>
<div class="rng" id="r3" style="color:#1d1d1f;font-weight:bold;letter-spacing:-1.100px;left:1003px">1d</div>
<div class="rng" id="r4" style=";letter-spacing:0.09px;left:1029px">3d</div>
<div class="rng" id="r5" style=";letter-spacing:-1.100px;left:1055.5px">1w</div>
<div class="rng" id="r6" style=";letter-spacing:0.28px;left:1081.3px">custom</div>
<svg class="abs" style="left:1129.300px;top:232.800px" width="15" height="14.060" viewBox="0 0 16 15" fill="none" stroke="#55555c" stroke-width="1" stroke-linecap="round" stroke-linejoin="round"><rect x=".8" y="2" width="14.400" height="12.200" rx="2.400"/><path d="M.8 5.600 H15.200 M4.600 .6 V3.200 M11.400 .6 V3.200"/><path d="M4.400 8.400 h.3 M7.900 8.400 h.3 M11.300 8.400 h.3 M4.400 11.200 h.3 M7.900 11.200 h.3 M11.300 11.200 h.3" stroke-width="1.200"/></svg>

<svg class="abs" style="left:293px;top:262px" width="885" height="340" viewBox="293 262 885 340" font-family="Liberation Sans, sans-serif">
<path d="M381.1 563.9 H1137.0 M381.1 516.0 H1137.0 M381.1 468.1 H1137.0 M381.1 420.1 H1137.0 M381.1 372.2 H1137.0 M381.1 324.3 H1137.0 M381.1 324.3 V563.9 M420.5 324.3 V563.9 M459.8 324.3 V563.9 M499.2 324.3 V563.9 M538.6 324.3 V563.9 M578.0 324.3 V563.9 M617.3 324.3 V563.9 M656.7 324.3 V563.9 M696.1 324.3 V563.9 M735.4 324.3 V563.9 M774.8 324.3 V563.9 M814.2 324.3 V563.9 M853.5 324.3 V563.9 M892.9 324.3 V563.9 M932.3 324.3 V563.9 M971.6 324.3 V563.9 M1011.0 324.3 V563.9 M1050.4 324.3 V563.9 M1089.8 324.3 V563.9 M1129.1 324.3 V563.9 M1137.0 324.3 V563.9" fill="none" stroke="#ededf0" stroke-width="1" stroke-dasharray="3 2.500"/>
<path d="M381.1 520.5 C382.5 523.3 385.0 532.9 387.9 534.3 C390.8 535.7 392.0 528.9 395.6 527.4 C399.2 525.9 402.6 528.3 405.9 526.9 C409.2 525.5 409.7 521.1 412.3 520.2 C414.9 519.3 415.4 519.0 418.7 522.3 C422.0 525.6 425.6 536.1 428.9 536.9 C432.2 537.7 431.3 529.3 435.4 526.1 C439.5 522.9 444.5 524.8 449.4 521.0 C454.3 517.2 455.8 510.4 459.7 506.9 C463.6 503.4 465.6 501.3 468.7 503.6 C471.8 505.9 471.7 514.0 475.0 518.4 C478.3 522.8 480.2 523.4 485.3 525.6 C490.4 527.8 495.6 528.9 500.7 529.5 C505.8 530.1 506.5 530.1 511.0 528.7 C515.5 527.3 517.6 521.6 523.0 522.3 C528.4 523.0 533.1 530.6 537.9 532.0 C542.7 533.4 542.2 529.0 546.8 529.5 C551.4 530.0 556.3 534.7 560.9 534.3 C565.5 533.9 566.3 527.4 569.9 527.4 C573.5 527.4 575.3 535.1 578.9 534.3 C582.5 533.5 584.5 525.9 587.8 523.6 C591.1 521.3 591.1 521.1 595.5 522.8 C599.9 524.5 605.5 531.5 609.6 532.0 C613.7 532.5 612.2 526.7 616.0 525.4 C619.8 524.1 625.2 524.6 628.8 525.4 C632.4 526.2 631.7 530.5 634.0 529.5 C636.3 528.5 637.6 520.6 640.4 520.2 C643.2 519.8 644.8 526.0 648.1 527.4 C651.4 528.8 653.7 527.8 657.0 527.4 C660.3 527.0 661.6 525.0 664.7 525.4 C667.8 525.8 669.1 528.7 672.4 529.5 C675.7 530.3 678.3 534.7 681.4 529.5 C684.5 524.3 685.2 504.1 687.8 503.6 C690.4 503.1 690.6 522.1 694.2 526.9 C697.8 531.7 702.1 528.3 705.7 527.4 C709.3 526.5 707.0 523.3 712.1 522.3 C717.2 521.3 726.5 521.4 731.4 522.3 C736.3 523.2 734.2 528.2 736.5 526.9 C738.8 525.6 739.8 516.8 742.9 515.9 C746.0 515.0 748.6 520.1 751.9 522.3 C755.2 524.5 756.5 527.8 759.5 526.9 C762.5 526.0 763.9 516.9 766.7 517.9 C769.5 518.9 769.9 530.2 773.6 531.8 C777.3 533.4 780.5 528.0 785.4 526.1 C790.3 524.2 792.6 521.6 798.2 522.3 C803.8 523.0 806.9 528.1 813.6 529.5 C820.3 530.9 826.6 532.3 831.5 529.5 C836.4 526.7 835.3 515.4 837.9 515.4 C840.5 515.4 841.0 527.1 844.3 529.5 C847.6 531.9 851.0 527.8 854.6 527.4 C858.2 527.0 859.2 527.0 862.3 527.4 C865.4 527.8 866.9 529.9 870.0 529.5 C873.1 529.1 874.8 525.4 877.6 525.4 C880.4 525.4 879.4 529.5 884.0 529.5 C888.6 529.5 894.5 524.9 900.7 525.4 C906.9 525.9 910.2 532.0 914.8 532.0 C919.4 532.0 920.0 526.7 923.8 525.4 C927.6 524.1 930.4 525.0 934.0 525.4 C937.6 525.8 936.8 527.0 941.7 527.4 C946.6 527.8 953.8 526.5 958.4 527.4 C963.0 528.3 962.0 532.5 964.8 532.0 C967.6 531.5 969.5 528.6 972.5 524.8 C975.5 521.0 976.6 512.0 979.6 512.8 C982.6 513.6 984.2 526.7 987.3 528.7 C990.4 530.7 991.9 523.2 995.0 522.8 C998.1 522.4 999.6 527.4 1002.7 526.9 C1005.8 526.4 1007.3 518.7 1010.4 520.2 C1013.5 521.7 1015.0 533.8 1018.1 534.3 C1021.2 534.8 1021.1 523.8 1025.8 522.8 C1030.5 521.8 1036.7 528.6 1041.7 529.5 C1046.7 530.4 1047.3 527.4 1050.6 527.4 C1053.9 527.4 1055.5 529.5 1058.3 529.5 C1061.1 529.5 1060.1 527.8 1064.7 527.4 C1069.3 527.0 1076.5 527.0 1081.4 527.4 C1086.3 527.8 1085.9 530.0 1089.1 529.5 C1092.3 529.0 1094.3 524.3 1097.5 524.8 C1100.7 525.3 1102.1 531.5 1105.2 532.0 C1108.3 532.5 1109.6 526.9 1112.9 527.4 C1116.2 527.9 1118.3 534.3 1121.6 534.3 C1124.9 534.3 1126.2 527.0 1129.3 527.4 C1132.4 527.8 1135.5 534.6 1137.0 536.4 L1137.0 563.9 L381.1 563.9 Z" fill="#fc7ffa"/>
<path d="M381.1 520.5 C382.5 523.3 385.0 532.9 387.9 534.3 C390.8 535.7 392.0 528.9 395.6 527.4 C399.2 525.9 402.6 528.3 405.9 526.9 C409.2 525.5 409.7 521.1 412.3 520.2 C414.9 519.3 415.4 519.0 418.7 522.3 C422.0 525.6 425.6 536.1 428.9 536.9 C432.2 537.7 431.3 529.3 435.4 526.1 C439.5 522.9 444.5 524.8 449.4 521.0 C454.3 517.2 455.8 510.4 459.7 506.9 C463.6 503.4 465.6 501.3 468.7 503.6 C471.8 505.9 471.7 514.0 475.0 518.4 C478.3 522.8 480.2 523.4 485.3 525.6 C490.4 527.8 495.6 528.9 500.7 529.5 C505.8 530.1 506.5 530.1 511.0 528.7 C515.5 527.3 517.6 521.6 523.0 522.3 C528.4 523.0 533.1 530.6 537.9 532.0 C542.7 533.4 542.2 529.0 546.8 529.5 C551.4 530.0 556.3 534.7 560.9 534.3 C565.5 533.9 566.3 527.4 569.9 527.4 C573.5 527.4 575.3 535.1 578.9 534.3 C582.5 533.5 584.5 525.9 587.8 523.6 C591.1 521.3 591.1 521.1 595.5 522.8 C599.9 524.5 605.5 531.5 609.6 532.0 C613.7 532.5 612.2 526.7 616.0 525.4 C619.8 524.1 625.2 524.6 628.8 525.4 C632.4 526.2 631.7 530.5 634.0 529.5 C636.3 528.5 637.6 520.6 640.4 520.2 C643.2 519.8 644.8 526.0 648.1 527.4 C651.4 528.8 653.7 527.8 657.0 527.4 C660.3 527.0 661.6 525.0 664.7 525.4 C667.8 525.8 669.1 528.7 672.4 529.5 C675.7 530.3 678.3 534.7 681.4 529.5 C684.5 524.3 685.2 504.1 687.8 503.6 C690.4 503.1 690.6 522.1 694.2 526.9 C697.8 531.7 702.1 528.3 705.7 527.4 C709.3 526.5 707.0 523.3 712.1 522.3 C717.2 521.3 726.5 521.4 731.4 522.3 C736.3 523.2 734.2 528.2 736.5 526.9 C738.8 525.6 739.8 516.8 742.9 515.9 C746.0 515.0 748.6 520.1 751.9 522.3 C755.2 524.5 756.5 527.8 759.5 526.9 C762.5 526.0 763.9 516.9 766.7 517.9 C769.5 518.9 769.9 530.2 773.6 531.8 C777.3 533.4 780.5 528.0 785.4 526.1 C790.3 524.2 792.6 521.6 798.2 522.3 C803.8 523.0 806.9 528.1 813.6 529.5 C820.3 530.9 826.6 532.3 831.5 529.5 C836.4 526.7 835.3 515.4 837.9 515.4 C840.5 515.4 841.0 527.1 844.3 529.5 C847.6 531.9 851.0 527.8 854.6 527.4 C858.2 527.0 859.2 527.0 862.3 527.4 C865.4 527.8 866.9 529.9 870.0 529.5 C873.1 529.1 874.8 525.4 877.6 525.4 C880.4 525.4 879.4 529.5 884.0 529.5 C888.6 529.5 894.5 524.9 900.7 525.4 C906.9 525.9 910.2 532.0 914.8 532.0 C919.4 532.0 920.0 526.7 923.8 525.4 C927.6 524.1 930.4 525.0 934.0 525.4 C937.6 525.8 936.8 527.0 941.7 527.4 C946.6 527.8 953.8 526.5 958.4 527.4 C963.0 528.3 962.0 532.5 964.8 532.0 C967.6 531.5 969.5 528.6 972.5 524.8 C975.5 521.0 976.6 512.0 979.6 512.8 C982.6 513.6 984.2 526.7 987.3 528.7 C990.4 530.7 991.9 523.2 995.0 522.8 C998.1 522.4 999.6 527.4 1002.7 526.9 C1005.8 526.4 1007.3 518.7 1010.4 520.2 C1013.5 521.7 1015.0 533.8 1018.1 534.3 C1021.2 534.8 1021.1 523.8 1025.8 522.8 C1030.5 521.8 1036.7 528.6 1041.7 529.5 C1046.7 530.4 1047.3 527.4 1050.6 527.4 C1053.9 527.4 1055.5 529.5 1058.3 529.5 C1061.1 529.5 1060.1 527.8 1064.7 527.4 C1069.3 527.0 1076.5 527.0 1081.4 527.4 C1086.3 527.8 1085.9 530.0 1089.1 529.5 C1092.3 529.0 1094.3 524.3 1097.5 524.8 C1100.7 525.3 1102.1 531.5 1105.2 532.0 C1108.3 532.5 1109.6 526.9 1112.9 527.4 C1116.2 527.9 1118.3 534.3 1121.6 534.3 C1124.9 534.3 1126.2 527.0 1129.3 527.4 C1132.4 527.8 1135.5 534.6 1137.0 536.4" transform="translate(0 .55)" fill="none" stroke="#fb63f7" stroke-width="1.100"/>
<text x="373.800" y="567.5" text-anchor="end" font-size="10.300" fill="#6c6c6c">0</text>
<text x="373.800" y="519.6" text-anchor="end" font-size="10.300" fill="#6c6c6c">20 %</text>
<text x="373.800" y="471.7" text-anchor="end" font-size="10.300" fill="#6c6c6c">40 %</text>
<text x="373.800" y="423.7" text-anchor="end" font-size="10.300" fill="#6c6c6c">60 %</text>
<text x="373.800" y="375.8" text-anchor="end" font-size="10.300" fill="#6c6c6c">80 %</text>
<text x="373.800" y="327.9" text-anchor="end" font-size="10.300" fill="#6c6c6c">100 %</text>
<text x="381.1" y="580.700" text-anchor="middle" font-size="10.300" fill="#6c6c6c">15:30</text>
<text x="420.5" y="580.700" text-anchor="middle" font-size="10.300" fill="#6c6c6c">16:45</text>
<text x="459.8" y="580.700" text-anchor="middle" font-size="10.300" fill="#6c6c6c">18:00</text>
<text x="499.2" y="580.700" text-anchor="middle" font-size="10.300" fill="#6c6c6c">19:15</text>
<text x="538.6" y="580.700" text-anchor="middle" font-size="10.300" fill="#6c6c6c">20:30</text>
<text x="578.0" y="580.700" text-anchor="middle" font-size="10.300" fill="#6c6c6c">21:45</text>
<text x="617.3" y="580.700" text-anchor="middle" font-size="10.300" fill="#6c6c6c">23:00</text>
<text x="656.7" y="580.700" text-anchor="middle" font-size="10.300" fill="#6c6c6c">00:15</text>
<text x="696.1" y="580.700" text-anchor="middle" font-size="10.300" fill="#6c6c6c">01:30</text>
<text x="735.4" y="580.700" text-anchor="middle" font-size="10.300" fill="#6c6c6c">02:45</text>
<text x="774.8" y="580.700" text-anchor="middle" font-size="10.300" fill="#6c6c6c">04:00</text>
<text x="814.2" y="580.700" text-anchor="middle" font-size="10.300" fill="#6c6c6c">05:15</text>
<text x="853.5" y="580.700" text-anchor="middle" font-size="10.300" fill="#6c6c6c">06:30</text>
<text x="892.9" y="580.700" text-anchor="middle" font-size="10.300" fill="#6c6c6c">07:45</text>
<text x="932.3" y="580.700" text-anchor="middle" font-size="10.300" fill="#6c6c6c">09:00</text>
<text x="971.6" y="580.700" text-anchor="middle" font-size="10.300" fill="#6c6c6c">10:15</text>
<text x="1011.0" y="580.700" text-anchor="middle" font-size="10.300" fill="#6c6c6c">11:30</text>
<text x="1050.4" y="580.700" text-anchor="middle" font-size="10.300" fill="#6c6c6c">12:45</text>
<text x="1089.8" y="580.700" text-anchor="middle" font-size="10.300" fill="#6c6c6c">14:00</text>
<text x="1137.0" y="580.700" text-anchor="middle" font-size="10.300" fill="#6c6c6c">15:30</text>
<path d="M684.200 280.400 H705.800" stroke="#fb62f7" stroke-width="2"/><circle cx="695" cy="280.300" r="4.700" fill="#fb5ef7"/>
<text id="lg" x="710.900" y="284.300" font-size="10.720" fill="#444">CPU Utilization</text>
</svg>
<div class="abs" id="t_top" style="top:652px;font-size:17.200px;line-height:21px;color:#151517;white-space:nowrap;-webkit-text-stroke:.45px #151517;letter-spacing:0.43px;left:329.4px">Top 10 processes</div>
<div class="abs" style="left:293px;top:697px;width:879px;height:1px;background:#efeff3"></div><div class="abs" style="left:293px;top:741px;width:879px;height:1px;background:#efeff3"></div>
<div class="abs" style="left:503.2px;top:713px;width:1px;height:20px;background:#e4e4e9"></div>
<div class="abs" style="left:647.7px;top:713px;width:1px;height:20px;background:#e4e4e9"></div>
<div class="abs" style="left:791.7px;top:713px;width:1px;height:20px;background:#e4e4e9"></div>
<div class="abs" style="left:936.2px;top:713px;width:1px;height:20px;background:#e4e4e9"></div>
<div class="cb" style="left:336.500px;top:714px"></div><div class="cb" style="left:336.500px;top:771.500px"></div><div class="cb" style="left:336.500px;top:822.500px"></div>
<div class="th" id="th0" style=";letter-spacing:-0.48px;left:363.7px">PROCESS</div>
<div class="th" id="th1" style=";letter-spacing:-0.34px;left:507.7px">PROCESS ID</div>
<div class="th" id="th2" style=";letter-spacing:-0.29px;left:652.2px">THREADS</div>
<div class="th" id="th3" style=";letter-spacing:-0.28px;left:796.2px">CPU USAGE</div>
<div class="td" id="td00" style="top:770.0px;letter-spacing:-0.08px;left:364.2px">dwm.exe</div>
<div class="td" id="td01" style="top:770.0px;letter-spacing:1.12px;left:508.2px">948</div>
<div class="td" id="td02" style="top:770.0px;letter-spacing:-1.34px;left:652.2px">13</div>
<div class="td" id="td03" style="top:770.0px;letter-spacing:0.13px;left:796.2px">0.39 %</div>
<div class="td" id="td10" style="top:821.2px;letter-spacing:-0.19px;left:364.2px">MsMpEng.exe</div>
<div class="td" id="td11" style="top:821.2px;letter-spacing:0.64px;left:508.2px">6432</div>
<div class="td" id="td12" style="top:821.2px;letter-spacing:-0.74px;left:652.2px">45</div>
<div class="td" id="td13" style="top:821.2px;letter-spacing:0.13px;left:796.2px">0.34 %</div>
<div class="abs" id="m_title" style="top:234px;font-size:17.600px;line-height:22px;color:#151517;white-space:nowrap;-webkit-text-stroke:.45px #151517;letter-spacing:0.41px;left:1231.2px">Manufacturer and model</div>
<div class="abs" id="m_cpu" style="top:299px;font-size:12.500px;line-height:16px;color:#3a3a40;white-space:nowrap;letter-spacing:0.1px;left:1231.2px">Intel(R) Core(TM) i5-8365U CPU @ 1.60GHz</div>
<div class="lbl" id="l0" style="top:334.7px;letter-spacing:-0.23px;left:1231.2px">Usage</div><div class="val" id="v0" style="top:334.7px;letter-spacing:0.18px;left:1420.2px">24.02 %</div>
<div class="lbl" id="l1" style="top:361.1px;letter-spacing:-0.23px;left:1231.2px">Speed</div><div class="val" id="v1" style="top:361.1px;letter-spacing:0.15px;left:1420.2px">2.484 GHz</div>
<div class="lbl" id="l2" style="top:387.8px;letter-spacing:-0.06px;left:1231.2px">Processes</div><div class="val" id="v2" style="top:387.8px;letter-spacing:0.45px;left:1420.2px">225</div>
<div class="lbl" id="l3" style="top:414.6px;letter-spacing:-0.05px;left:1231.2px">Threads</div><div class="val" id="v3" style="top:414.6px;letter-spacing:-0.23px;left:1420.2px">2912</div>
<div class="lbl" id="l4" style="top:441.0px;letter-spacing:-0.08px;left:1231.2px">Max Speed</div><div class="val" id="v4" style="top:441.0px;letter-spacing:-0.15px;left:1420.2px">1.896 GHz</div>
<div class="lbl" id="l5" style="top:467.8px;letter-spacing:-0.05px;left:1231.2px">Handles</div><div class="val" id="v5" style="top:467.8px;letter-spacing:0.84px;left:1420.2px">84003</div>
<div class="lbl" id="l6" style="top:512.5px;letter-spacing:0.01px;left:1231.2px">Processors</div><div class="val" id="v6" style="top:512.5px">1</div>
<div class="lbl" id="l7" style="top:538.9px;letter-spacing:0.21px;left:1231.2px">Architecture</div><div class="val" id="v7" style="top:538.9px;letter-spacing:0.26px;left:1420.2px">x86_64</div>
<div class="lbl" id="l8" style="top:565.7px;letter-spacing:-0.01px;left:1231.2px">Physical cores</div><div class="val" id="v8" style="top:565.7px">4</div>
<div class="lbl" id="l9" style="top:592.5px;letter-spacing:0.07px;left:1231.2px">Logical cores</div><div class="val" id="v9" style="top:592.5px">8</div>
<div class="lbl" id="l10" style="top:637.0px;letter-spacing:-0.3px;left:1231.2px">L1 cache</div><div class="val" id="v10" style="top:637.0px;letter-spacing:0.02px;left:1420.2px">256 KB</div>
<div class="lbl" id="l11" style="top:663.5px;letter-spacing:0.04px;left:1231.2px">L2 cache</div><div class="val" id="v11" style="top:663.5px;letter-spacing:-.350px;word-spacing:-1.200px;left:1420.2px">1 MB</div>
<div class="lbl" id="l12" style="top:690.3px;letter-spacing:0.1px;left:1231.2px">L3 cache</div><div class="val" id="v12" style="top:690.3px;letter-spacing:-0.07px;left:1420.2px">6 MB</div>
</body>
</html>
